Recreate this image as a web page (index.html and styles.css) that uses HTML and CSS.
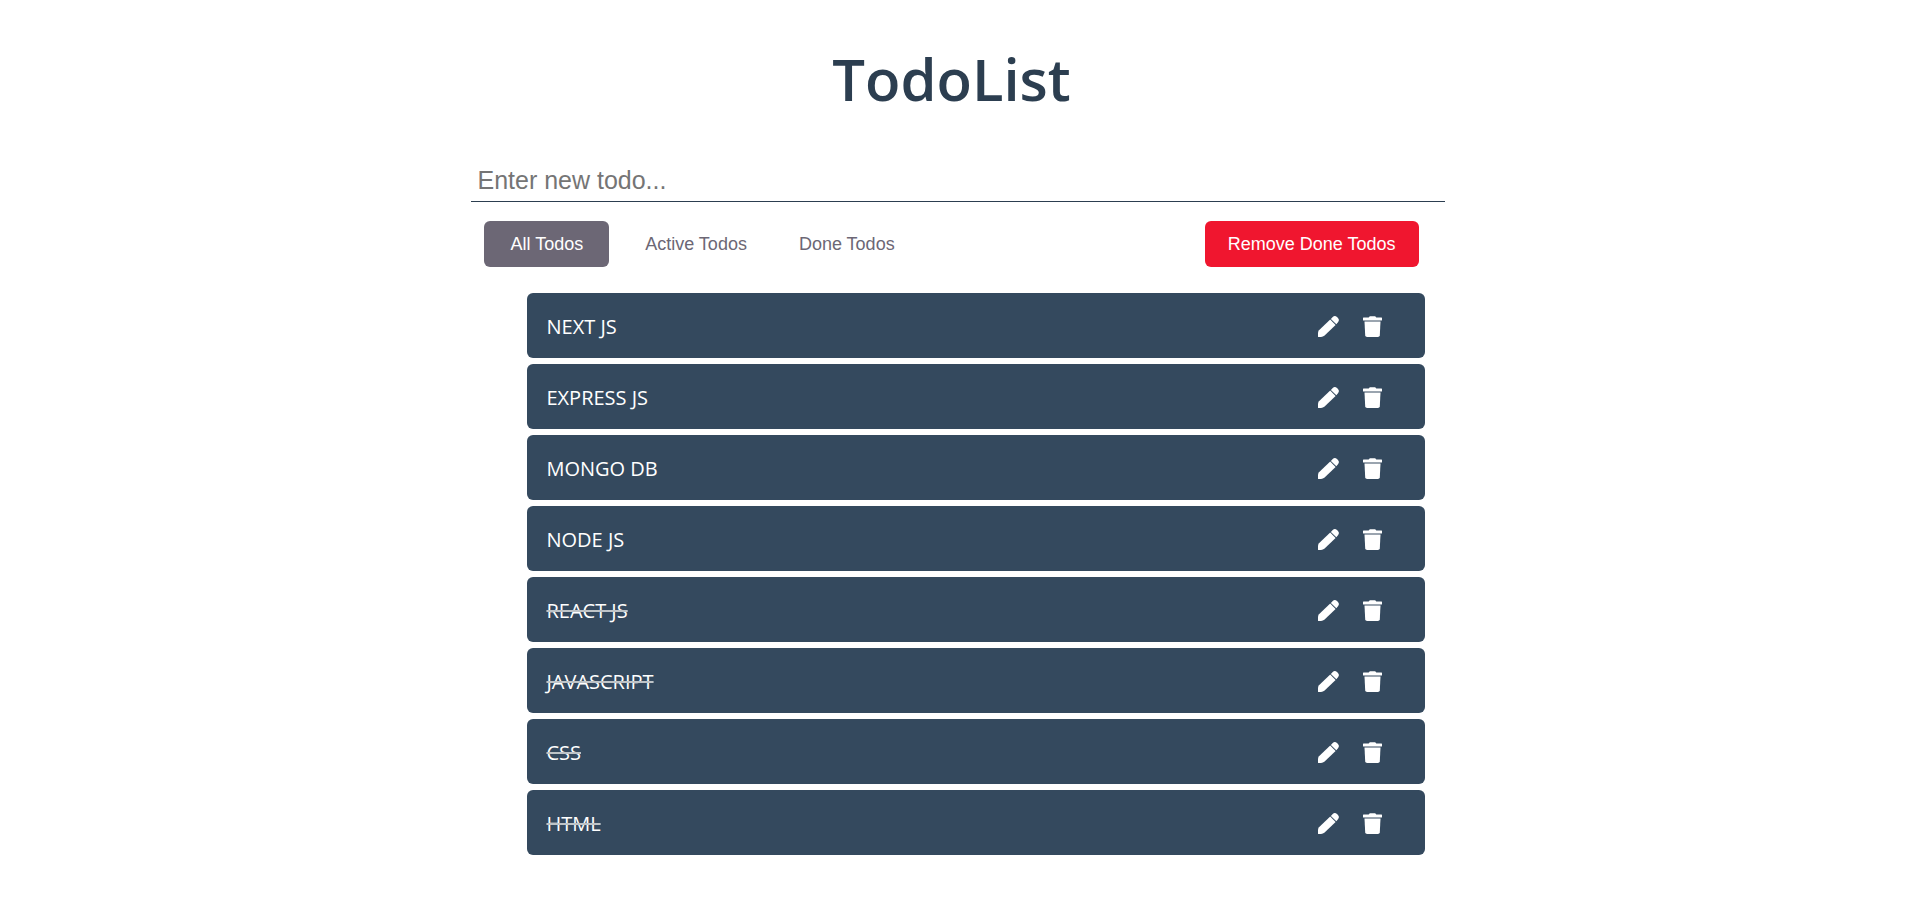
FILE: index.html
```html
<!DOCTYPE html>
<html lang="en">
<head>
<meta charset="utf-8">
<title>TodoList</title>
<link rel="stylesheet" href="styles.css">
</head>
<body>
<svg class="sprite" aria-hidden="true">
  <symbol id="pencil" viewBox="0 0 21 21">
    <path d="M1 14.200 12.200 3.600l5.400 5.400L6.600 19.600Q5 21 3 21H.4Q0 21 0 20.500V17q0-1.800 1-2.800z"/>
    <path d="M12.900 2.900 14.700 1q2.200-2 4.500.2l.6.6q2.100 2.200.2 4.400l-1.700 2.100z"/>
  </symbol>
  <symbol id="trash" viewBox="0 0 19 21">
    <path d="M.5 1.400h5.200L6.800.2h5.400l1.100 1.200h5.200q.5 0 .5.500V4q0 .5-.5.500H.5Q0 4.500 0 4V1.900q0-.5.5-.5z"/>
    <path d="M1.500 5.400h16l-.7 13.800q-.1 1.800-1.900 1.800H4.100q-1.800 0-1.900-1.800z"/>
  </symbol>
</svg>
<main class="app">
  <h1 class="title">TodoList</h1>
  <form class="entry">
    <input class="entry-input" type="text" placeholder="Enter new todo..." aria-label="New todo">
  </form>
  <div class="toolbar">
    <button class="filter active" type="button">All Todos</button>
    <button class="filter" type="button">Active Todos</button>
    <button class="filter" type="button">Done Todos</button>
    <button class="remove" type="button">Remove Done Todos</button>
  </div>
  <ul class="todos">
    <li class="todo"><span class="name">NEXT JS</span><button class="icon" type="button" aria-label="Edit"><svg class="pencil"><use href="#pencil"/></svg></button><button class="icon" type="button" aria-label="Delete"><svg class="trash"><use href="#trash"/></svg></button></li>
    <li class="todo"><span class="name">EXPRESS JS</span><button class="icon" type="button" aria-label="Edit"><svg class="pencil"><use href="#pencil"/></svg></button><button class="icon" type="button" aria-label="Delete"><svg class="trash"><use href="#trash"/></svg></button></li>
    <li class="todo"><span class="name">MONGO DB</span><button class="icon" type="button" aria-label="Edit"><svg class="pencil"><use href="#pencil"/></svg></button><button class="icon" type="button" aria-label="Delete"><svg class="trash"><use href="#trash"/></svg></button></li>
    <li class="todo"><span class="name">NODE JS</span><button class="icon" type="button" aria-label="Edit"><svg class="pencil"><use href="#pencil"/></svg></button><button class="icon" type="button" aria-label="Delete"><svg class="trash"><use href="#trash"/></svg></button></li>
    <li class="todo done"><span class="name">REACT JS</span><button class="icon" type="button" aria-label="Edit"><svg class="pencil"><use href="#pencil"/></svg></button><button class="icon" type="button" aria-label="Delete"><svg class="trash"><use href="#trash"/></svg></button></li>
    <li class="todo done"><span class="name">JAVASCRIPT</span><button class="icon" type="button" aria-label="Edit"><svg class="pencil"><use href="#pencil"/></svg></button><button class="icon" type="button" aria-label="Delete"><svg class="trash"><use href="#trash"/></svg></button></li>
    <li class="todo done"><span class="name">CSS</span><button class="icon" type="button" aria-label="Edit"><svg class="pencil"><use href="#pencil"/></svg></button><button class="icon" type="button" aria-label="Delete"><svg class="trash"><use href="#trash"/></svg></button></li>
    <li class="todo done"><span class="name">HTML</span><button class="icon" type="button" aria-label="Edit"><svg class="pencil"><use href="#pencil"/></svg></button><button class="icon" type="button" aria-label="Delete"><svg class="trash"><use href="#trash"/></svg></button></li>
  </ul>
</main>
</body>
</html>
```
FILE: styles.css
```css
* { box-sizing: border-box; }
body {
  margin: 0;
  background: #fff;
  font-family: "Open Sans", "Noto Sans", sans-serif;
}
.sprite { display: none; }
.app { width: 51%; margin: 0 0 0 calc(24.5% + 4px); padding-top: 34px; }
.title {
  margin: 0 13px 0 0;
  color: #2c3e50;
  font-size: 58px;
  font-weight: 600;
  line-height: 90px;
  text-align: center;
}
.entry { margin-top: 36px; }
.entry-input {
  display: block;
  width: 100%;
  padding: 6px;
  border: 0;
  border-bottom: 1px solid #2c3e50;
  outline: 0;
  background: transparent;
  font: 25px/29px "Liberation Sans", Arial, sans-serif;
}
.entry-input::placeholder { color: #757575; }
.toolbar { display: flex; padding: 19px 26px 26px 3px; }
.filter, .remove {
  height: 46px;
  padding: 0 26px;
  border: 0;
  border-radius: 6px;
  background: transparent;
  color: #6c6775;
  font: 18px "Liberation Sans", Arial, sans-serif;
}
.filter.active { margin: 0 10px; background: #6c6775; color: #fff; }
.remove { margin-left: auto; padding: 0 23px; background: #f0162f; color: #fff; }
.todos {
  display: grid;
  gap: 6px;
  margin: 0 20px 40px 56px;
  padding: 0;
  list-style: none;
}
.todo {
  display: flex;
  align-items: center;
  min-height: 65px;
  padding: 1px 43px 0 19px;
  border-radius: 6px;
  background: #34495e;
  color: #fff;
  font-size: 20px;
}
.name { flex: 1; }
.done .name { text-decoration: line-through 2px #bdc3c7; }
.icon {
  display: flex;
  margin-left: 24px;
  padding: 0;
  border: 0;
  background: transparent;
  color: #fff;
}
.pencil, .trash { height: 21px; fill: currentColor; }
.pencil { width: 21px; }
.trash { width: 19px; }
```
